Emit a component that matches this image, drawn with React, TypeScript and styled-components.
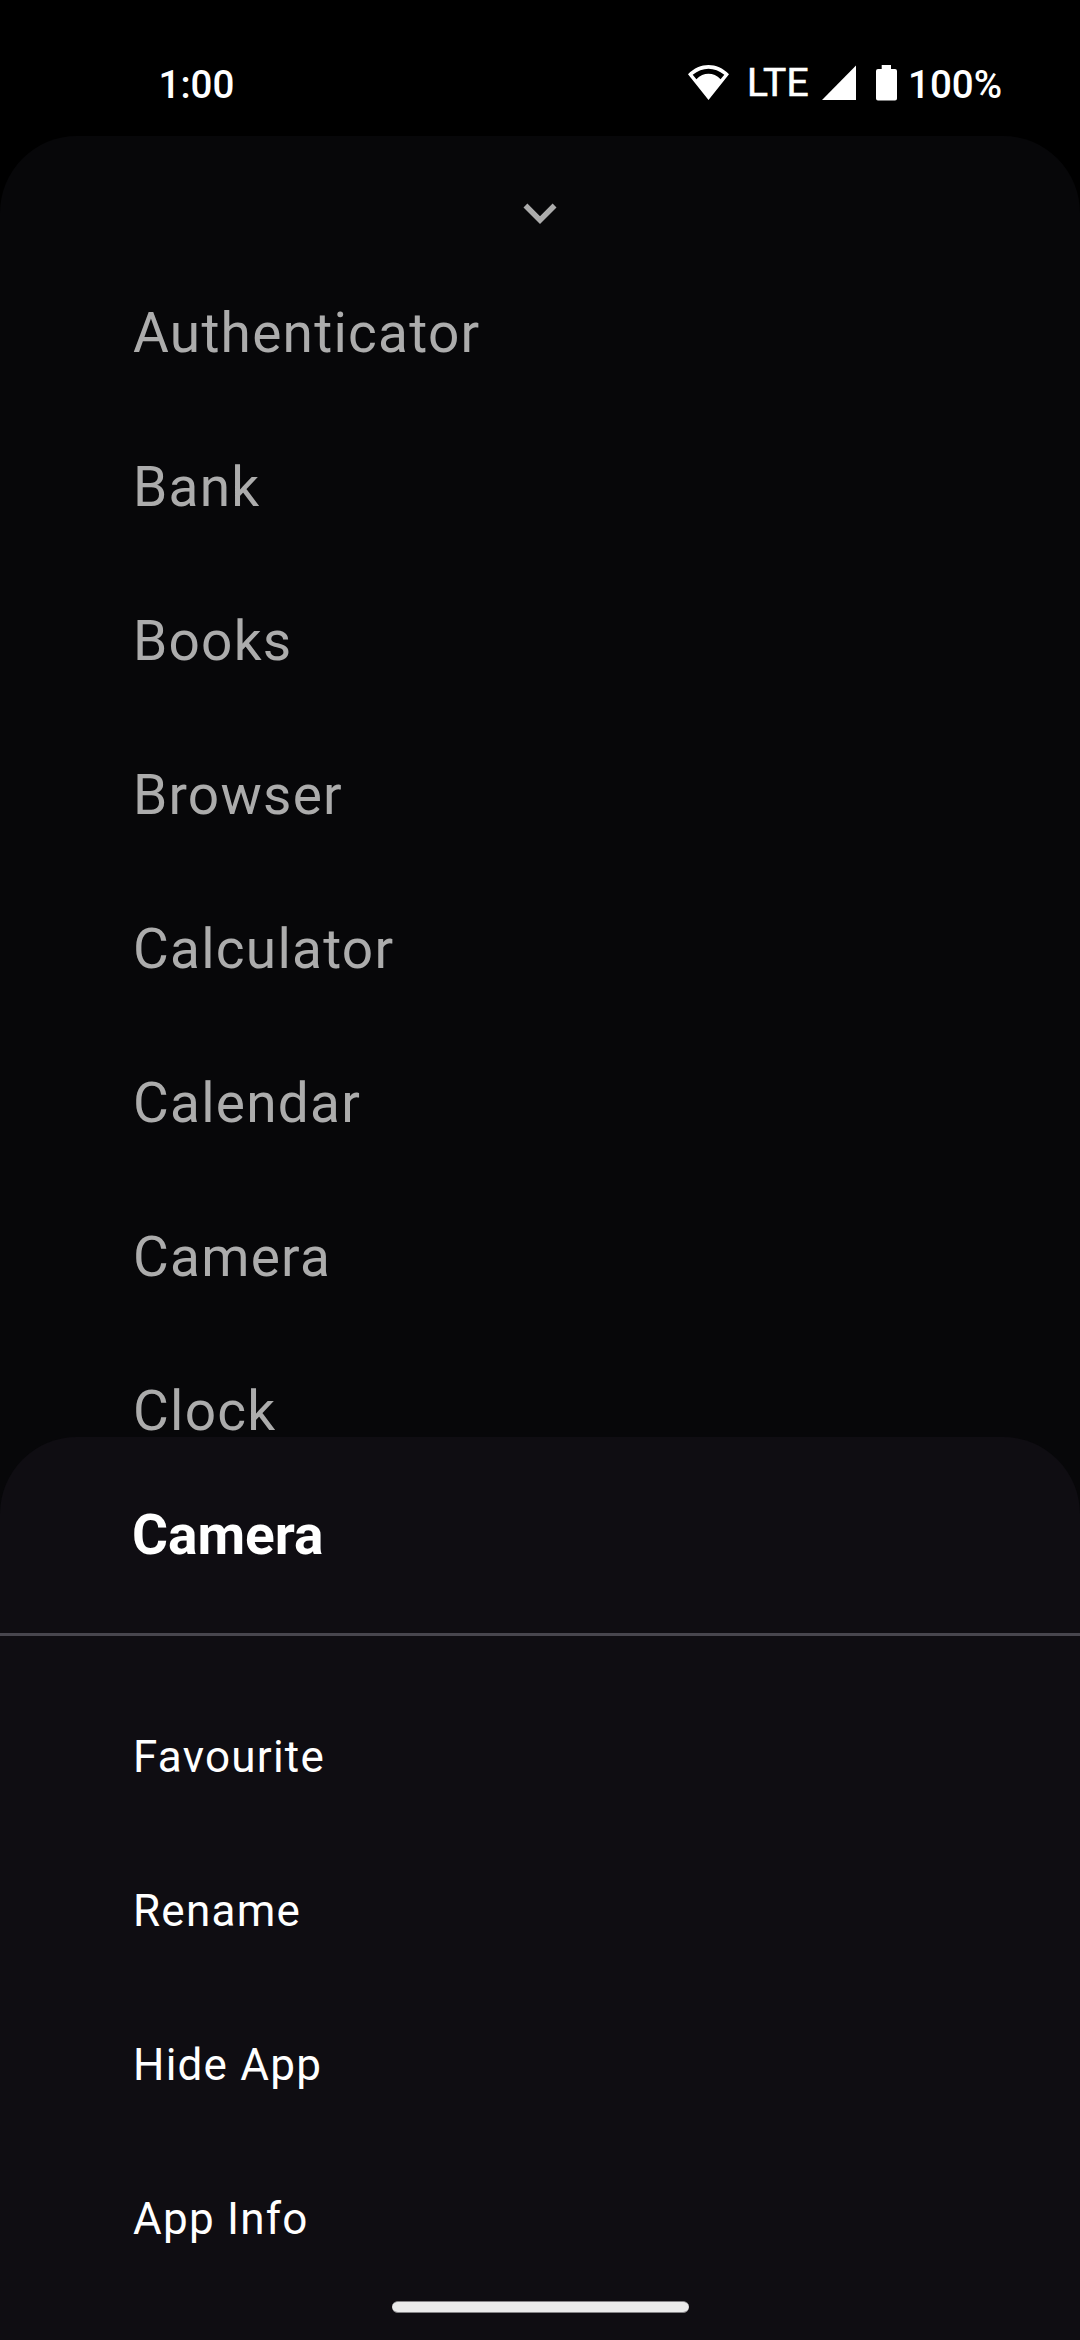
import React from "react";
import styled, { createGlobalStyle } from "styled-components";

const Global = createGlobalStyle`
  *{box-sizing:border-box}
  body{margin:0;background:#000;font-family:Roboto,sans-serif;overflow:hidden}
`;
const Screen = styled.main`width:1080px;height:2340px;background:#000;display:flex;flex-direction:column;overflow:hidden;`;
const StatusBar = styled.header`height:136px;flex:none;display:flex;justify-content:space-between;padding:60px 84px 0 158.5px;color:#fff;font-size:38.5px;font-weight:500;line-height:48px;`;
const Clock = styled.time`padding-top:1px;`;
const StatusIcons = styled.div`display:flex;`;
const Network = styled.span`width:78px;padding-left:18px;margin-top:-1px;font-size:39px;font-weight:400;letter-spacing:0.2px;white-space:nowrap;-webkit-text-stroke:0.6px #fff;`;
const Battery = styled.span`width:99px;padding-left:11px;padding-top:1px;white-space:nowrap;`;
const Icon = styled.svg<{ $gap?: number }>`display:block;flex:none;margin-left:${p => p.$gap ?? 0}px;`;
const Drawer = styled.section`height:1378px;flex:none;background:#070709;border-radius:77px 77px 0 0;overflow:hidden;`;
const Handle = styled.div`height:120px;padding-top:44px;display:flex;justify-content:center;`;
const AppRow = styled.div`height:154px;padding-left:133px;display:flex;align-items:center;color:#acacac;font-size:55px;letter-spacing:1.24px;`;
const Sheet = styled.section`height:903px;margin-top:-77px;position:relative;flex:none;background:#0f0d12;border-radius:77px 77px 0 0;display:flex;flex-direction:column;`;
const Title = styled.h1`margin:0;height:199px;flex:none;padding-left:132px;border-bottom:3px solid #48464e;display:flex;align-items:center;color:#fff;font-size:55px;font-weight:700;`;
const Actions = styled.div`padding-top:44px;height:665px;flex:none;`;
const Action = styled.div`height:154px;padding-left:133px;display:flex;align-items:center;color:#fff;font-size:44px;letter-spacing:1.24px;`;
const NavPill = styled.div`width:297px;height:12px;border-radius:6px;background:#ebebeb;border:solid #858487;border-width:1px 0;align-self:center;`;

const apps = ["Authenticator", "Bank", "Books", "Browser", "Calculator", "Calendar", "Camera", "Clock"];
const actions = ["Favourite", "Rename", "Hide App", "App Info"];

export default function App() {
  return (
    <>
      <Global />
      <Screen>
        <StatusBar>
          <Clock>1:00</Clock>
          <StatusIcons>
            <Icon width="41" height="48" viewBox="0 0 41 48">
              <path fillRule="evenodd" fill="#fff" d="M0 14.2C12 2 29 2 41 14.2L20.5 40ZM4.7 14.8L8.4 19.2C15.5 12 25.5 12 32.6 19.2L36.3 14.8C26.5 6.7 14.5 6.7 4.7 14.8Z" />
            </Icon>
            <Network>LTE</Network>
            <Icon $gap={15} width="34" height="48"><path d="M34 5.5V40H0Z" fill="#fff" /></Icon>
            <Icon $gap={20} width="21" height="48">
              <path d="M5.7 5h9.3v4h4q2 0 2 2v27.5q0 2-2 2H2q-2 0-2-2V11q0-2 2-2h3.700z" fill="#fff" />
            </Icon>
            <Battery>100%</Battery>
          </StatusIcons>
        </StatusBar>
        <Drawer>
          <Handle>
            <Icon width="66" height="66" viewBox="0 0 24 24">
              <path fill="#acacac" d="M7.41 8.59L12 13.17l4.59-4.58L18 10l-6 6-6-6z" />
            </Icon>
          </Handle>
          {apps.map(a => <AppRow key={a}>{a}</AppRow>)}
        </Drawer>
        <Sheet>
          <Title>Camera</Title>
          <Actions>{actions.map(a => <Action key={a}>{a}</Action>)}</Actions>
          <NavPill />
        </Sheet>
      </Screen>
    </>
  );
}
